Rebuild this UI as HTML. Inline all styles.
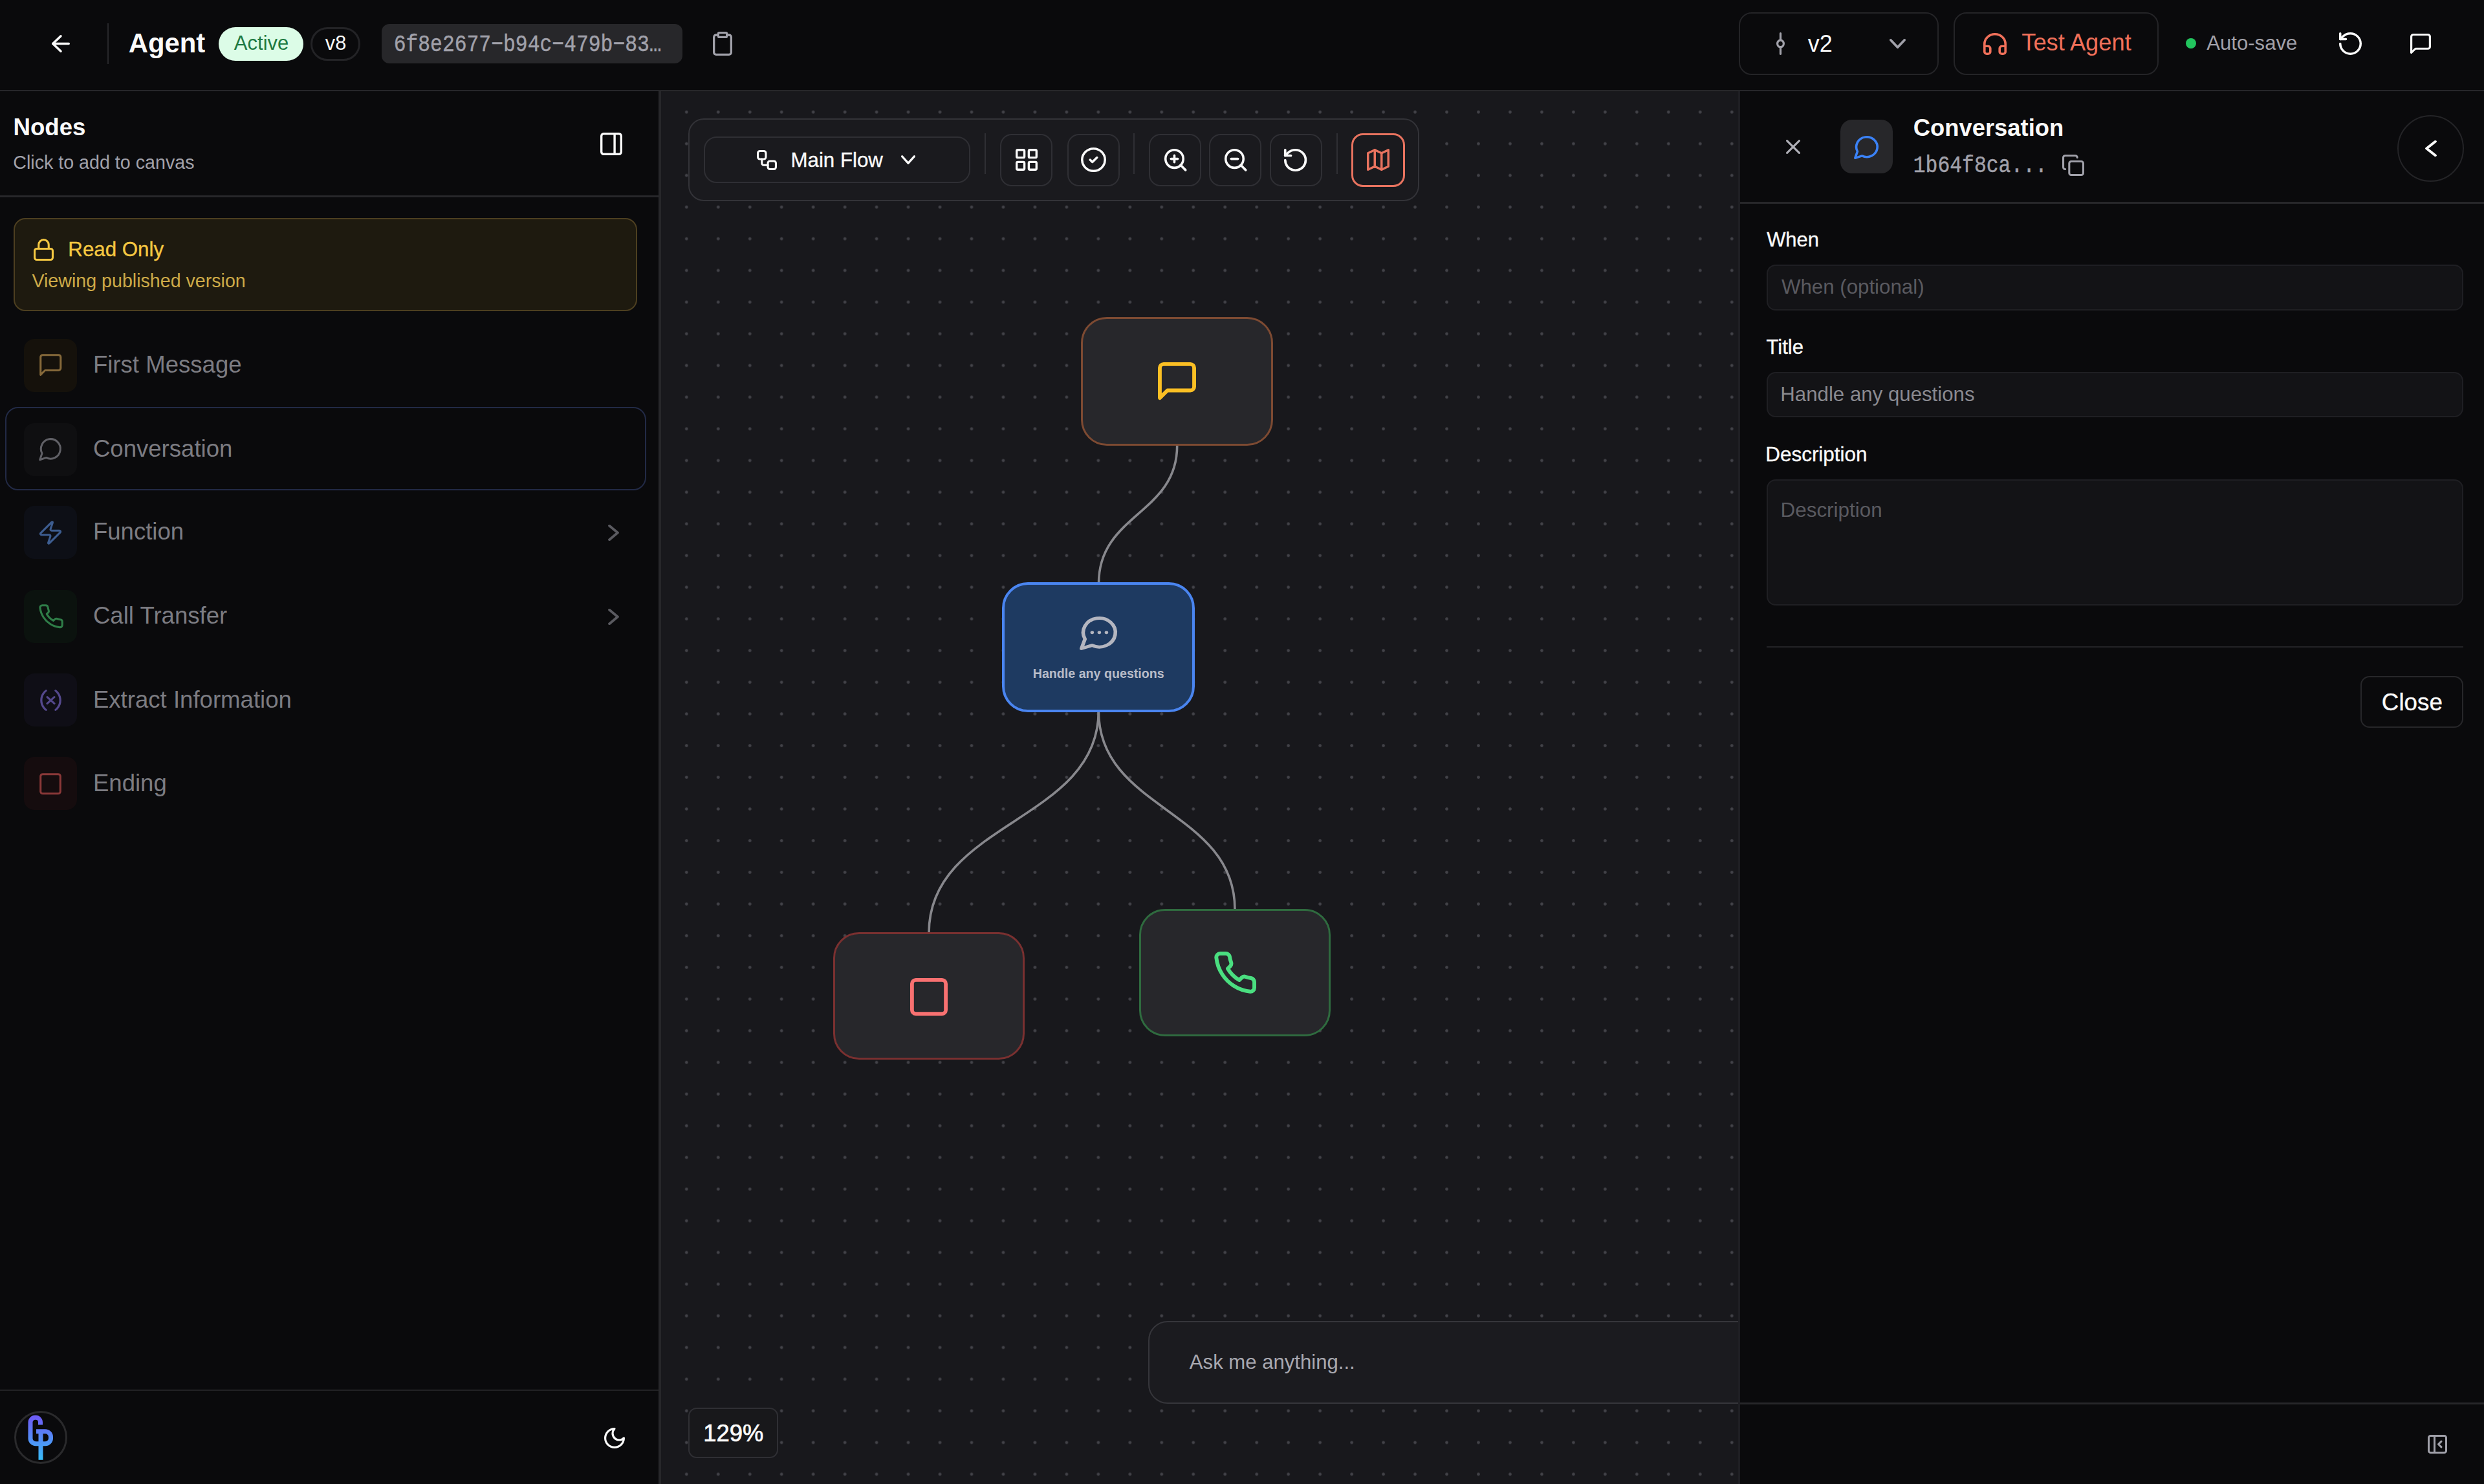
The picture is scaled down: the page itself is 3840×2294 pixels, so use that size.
<!DOCTYPE html>
<html><head><meta charset="utf-8"><title>Agent</title>
<style>
html,body{margin:0;padding:0;background:#0a0a0c;}
body{position:relative;width:3840px;height:2294px;overflow:hidden;font-family:"Liberation Sans",sans-serif;-webkit-font-smoothing:antialiased;}
svg{overflow:visible}
</style></head><body>
<div style="position:absolute;left:1020px;top:141px;width:1668px;height:2153px;background-color:#18181c;background-image:radial-gradient(circle at 24.4875px 24.4875px, #424248 0, #424248 1.8px, rgba(70,70,76,0) 2.9px);background-size:48.975px 48.975px;background-position:16.81px 7.71px"></div>
<div style="position:absolute;left:0px;top:0px;width:3840px;height:139px;box-sizing:border-box;background:#0a0a0c"></div>
<div style="position:absolute;left:0px;top:139px;width:3840px;height:2px;box-sizing:border-box;background:#27272a"></div>
<svg style="position:absolute;left:80px;top:54px;" width="28" height="27" viewBox="4 4 16 16" preserveAspectRatio="none" fill="none" stroke="#fafafa" stroke-width="2" stroke-linecap="round" stroke-linejoin="round"><path d="m12 19-7-7 7-7"/><path d="M19 12H5"/></svg>
<div style="position:absolute;left:166px;top:36px;width:2px;height:63px;box-sizing:border-box;background:#27272a"></div>
<div style="position:absolute;left:198.65px;top:40.17px;font:700 41.9px/54px 'Liberation Sans', sans-serif;color:#fafafa;white-space:nowrap;">Agent</div>
<div style="position:absolute;left:338px;top:42px;width:131px;height:52px;box-sizing:border-box;background:#dcfce7;border-radius:26px"></div>
<div style="position:absolute;left:361.84px;top:46.84px;font:400 31.03px/40px 'Liberation Sans', sans-serif;color:#1e7a42;white-space:nowrap;">Active</div>
<div style="position:absolute;left:480px;top:42px;width:77px;height:52px;box-sizing:border-box;border:3px solid #232326;border-radius:26px"></div>
<div style="position:absolute;left:502.85px;top:47.36px;font:400 30.69px/40px 'Liberation Sans', sans-serif;color:#fafafa;white-space:nowrap;">v8</div>
<div style="position:absolute;left:590px;top:37px;width:465px;height:61px;box-sizing:border-box;background:#27272a;border-radius:12px"></div>
<div style="position:absolute;left:608.65px;top:49.65px;font:400 31.37px/41px 'Liberation Mono', monospace;color:#a1a1aa;white-space:nowrap;transform:scaleY(1.16);transform-origin:0 28.85px;-webkit-text-stroke:0.4px currentColor;">6f8e2677−b94c−479b−83…</div>
<svg style="position:absolute;left:1102px;top:49px;" width="30" height="37" viewBox="3 1 18 22" preserveAspectRatio="none" fill="none" stroke="#a1a1aa" stroke-width="2" stroke-linecap="round" stroke-linejoin="round"><rect width="8" height="4" x="8" y="2" rx="1" ry="1"/><path d="M16 4h2a2 2 0 0 1 2 2v14a2 2 0 0 1-2 2H6a2 2 0 0 1-2-2V6a2 2 0 0 1 2-2h2"/></svg>
<div style="position:absolute;left:2688px;top:19px;width:309px;height:97px;box-sizing:border-box;border:2.5px solid #242427;border-radius:20px"></div>
<svg style="position:absolute;left:2746px;top:50px;" width="13" height="35" viewBox="8 2 8 20" preserveAspectRatio="none" fill="none" stroke="#a1a1aa" stroke-width="2" stroke-linecap="round" stroke-linejoin="round"><path d="M12 3v6"/><circle cx="12" cy="12" r="3"/><path d="M12 15v6"/></svg>
<div style="position:absolute;left:2794.82px;top:44.02px;font:400 36.0px/47px 'Liberation Sans', sans-serif;color:#fafafa;white-space:nowrap;">v2</div>
<svg style="position:absolute;left:2921px;top:60px;" width="25" height="15" viewBox="5 8 14 8" preserveAspectRatio="none" fill="none" stroke="#a1a1aa" stroke-width="2" stroke-linecap="round" stroke-linejoin="round"><path d="m6 9 6 6 6-6"/></svg>
<div style="position:absolute;left:3020px;top:19px;width:317px;height:97px;box-sizing:border-box;border:2.5px solid #242427;border-radius:20px"></div>
<svg style="position:absolute;left:3066px;top:51px;" width="36" height="34" viewBox="2 2 20 20" preserveAspectRatio="none" fill="none" stroke="#f0705a" stroke-width="2" stroke-linecap="round" stroke-linejoin="round"><path d="M3 14h3a2 2 0 0 1 2 2v3a2 2 0 0 1-2 2H5a2 2 0 0 1-2-2v-7a9 9 0 0 1 18 0v7a2 2 0 0 1-2 2h-1a2 2 0 0 1-2-2v-3a2 2 0 0 1 2-2h3"/></svg>
<div style="position:absolute;left:3125.27px;top:42.31px;font:400 36.3px/47px 'Liberation Sans', sans-serif;color:#f0705a;white-space:nowrap;">Test Agent</div>
<div style="position:absolute;left:3379px;top:59px;width:16px;height:16px;box-sizing:border-box;background:#22c55e;border-radius:50%"></div>
<div style="position:absolute;left:3411.34px;top:46.62px;font:400 31.09px/40px 'Liberation Sans', sans-serif;color:#a1a1aa;white-space:nowrap;">Auto-save</div>
<svg style="position:absolute;left:3616px;top:50px;" width="35" height="35" viewBox="2 2 20 20" preserveAspectRatio="none" fill="none" stroke="#fafafa" stroke-width="2" stroke-linecap="round" stroke-linejoin="round"><path d="M3 12a9 9 0 1 0 9-9 9.75 9.75 0 0 0-6.74 2.74L3 8"/><path d="M3 3v5h5"/></svg>
<svg style="position:absolute;left:3726px;top:52px;" width="32" height="31" viewBox="2 2 20 20" preserveAspectRatio="none" fill="none" stroke="#fafafa" stroke-width="2" stroke-linecap="round" stroke-linejoin="round"><path d="M21 15a2 2 0 0 1-2 2H7l-4 4V5a2 2 0 0 1 2-2h14a2 2 0 0 1 2 2z"/></svg>
<div style="position:absolute;left:0px;top:141px;width:1018px;height:2153px;box-sizing:border-box;background:#0a0a0c"></div>
<div style="position:absolute;left:1018px;top:141px;width:4px;height:2153px;box-sizing:border-box;background:#27272a"></div>
<div style="position:absolute;left:20.42px;top:173.28px;font:700 36.68px/48px 'Liberation Sans', sans-serif;color:#fafafa;white-space:nowrap;">Nodes</div>
<div style="position:absolute;left:20.27px;top:232.57px;font:400 28.65px/37px 'Liberation Sans', sans-serif;color:#a1a1aa;white-space:nowrap;">Click to add to canvas</div>
<svg style="position:absolute;left:928px;top:205px;" width="34" height="35" viewBox="2 2 20 20" preserveAspectRatio="none" fill="none" stroke="#fafafa" stroke-width="2" stroke-linecap="round" stroke-linejoin="round"><rect width="18" height="18" x="3" y="3" rx="2"/><path d="M15 3v18"/></svg>
<div style="position:absolute;left:0px;top:302px;width:1018px;height:3px;box-sizing:border-box;background:#27272a"></div>
<div style="position:absolute;left:21px;top:337px;width:964px;height:144px;box-sizing:border-box;background:#1e1a0f;border:2.5px solid #4d3f20;border-radius:18px"></div>
<svg style="position:absolute;left:52px;top:369px;" width="31" height="34" viewBox="2 1 20 22" preserveAspectRatio="none" fill="none" stroke="#f5c842" stroke-width="2" stroke-linecap="round" stroke-linejoin="round"><rect width="18" height="11" x="3" y="11" rx="2" ry="2"/><path d="M7 11V7a5 5 0 0 1 10 0v4"/></svg>
<div style="position:absolute;left:105.30px;top:365.05px;font:400 31.29px/41px 'Liberation Sans', sans-serif;color:#f5c842;white-space:nowrap;-webkit-text-stroke:0.35px currentColor;">Read Only</div>
<div style="position:absolute;left:49.46px;top:416.18px;font:400 28.61px/37px 'Liberation Sans', sans-serif;color:#cdaa48;white-space:nowrap;">Viewing published version</div>
<div style="position:absolute;left:8px;top:629px;width:991px;height:129px;box-sizing:border-box;border:2.5px solid #222a46;border-radius:20px"></div>
<div style="position:absolute;left:37px;top:524px;width:82px;height:82px;box-sizing:border-box;background:#15110b;border-radius:16px"></div>
<svg style="position:absolute;left:60.7px;top:547px;" width="34.5" height="34" viewBox="2 2 20 20" preserveAspectRatio="none" fill="none" stroke="#86693a" stroke-width="1.8" stroke-linecap="round" stroke-linejoin="round"><path d="M21 15a2 2 0 0 1-2 2H7l-4 4V5a2 2 0 0 1 2-2h14a2 2 0 0 1 2 2z"/></svg>
<div style="position:absolute;left:143.90px;top:540.11px;font:400 36.6px/48px 'Liberation Sans', sans-serif;color:#7c7c82;white-space:nowrap;">First Message</div>
<div style="position:absolute;left:37px;top:654px;width:82px;height:82px;box-sizing:border-box;background:#0f0f11;border-radius:16px"></div>
<svg style="position:absolute;left:60px;top:676.5px;" width="35" height="35.5" viewBox="1 2 21 21" preserveAspectRatio="none" fill="none" stroke="#606066" stroke-width="1.8" stroke-linecap="round" stroke-linejoin="round"><path d="M7.9 20A9 9 0 1 0 4 16.1L2 22Z"/></svg>
<div style="position:absolute;left:143.90px;top:670.31px;font:400 36.6px/48px 'Liberation Sans', sans-serif;color:#7c7c82;white-space:nowrap;">Conversation</div>
<div style="position:absolute;left:37px;top:782px;width:82px;height:82px;box-sizing:border-box;background:#0d0f16;border-radius:16px"></div>
<svg style="position:absolute;left:61px;top:805px;" width="34" height="37" viewBox="2.2 0.9 19.6 22.200000000000003" preserveAspectRatio="none" fill="none" stroke="#3d5d90" stroke-width="1.8" stroke-linecap="round" stroke-linejoin="round"><path d="M4 14a1 1 0 0 1-.78-1.63l9.9-10.2a.5.5 0 0 1 .86.46l-1.92 6.02A1 1 0 0 0 13 10h7a1 1 0 0 1 .78 1.63l-9.9 10.2a.5.5 0 0 1-.86-.46l1.92-6.02A1 1 0 0 0 11 14z"/></svg>
<div style="position:absolute;left:143.90px;top:798.21px;font:400 36.6px/48px 'Liberation Sans', sans-serif;color:#7c7c82;white-space:nowrap;">Function</div>
<div style="position:absolute;left:37px;top:912px;width:82px;height:82px;box-sizing:border-box;background:#0b120e;border-radius:16px"></div>
<svg style="position:absolute;left:59.5px;top:934px;" width="38.0" height="37.5" viewBox="1 1 22 22" preserveAspectRatio="none" fill="none" stroke="#2f7d48" stroke-width="1.8" stroke-linecap="round" stroke-linejoin="round"><path d="M22 16.92v3a2 2 0 0 1-2.18 2 19.79 19.79 0 0 1-8.63-3.07 19.5 19.5 0 0 1-6-6 19.79 19.79 0 0 1-3.07-8.67A2 2 0 0 1 4.11 2h3a2 2 0 0 1 2 1.72 12.84 12.84 0 0 0 .7 2.81 2 2 0 0 1-.45 2.11L8.09 9.910a16 16 0 0 0 6 6l1.27-1.27a2 2 0 0 1 2.11-.45 12.84 12.84 0 0 0 2.81.7A2 2 0 0 1 22 16.92z"/></svg>
<div style="position:absolute;left:143.90px;top:928.11px;font:400 36.6px/48px 'Liberation Sans', sans-serif;color:#7c7c82;white-space:nowrap;">Call Transfer</div>
<div style="position:absolute;left:37px;top:1041px;width:82px;height:82px;box-sizing:border-box;background:#0f0e16;border-radius:16px"></div>
<svg style="position:absolute;left:61.5px;top:1066px;" width="33.0" height="33" viewBox="3 2 18 20" preserveAspectRatio="none" fill="none" stroke="#54488c" stroke-width="1.8" stroke-linecap="round" stroke-linejoin="round"><path d="M8 21s-4-3-4-9 4-9 4-9"/><path d="M16 3s4 3 4 9-4 9-4 9"/><line x1="15" x2="9" y1="9" y2="15"/><line x1="9" x2="15" y1="9" y2="15"/></svg>
<div style="position:absolute;left:143.90px;top:1057.61px;font:400 36.6px/48px 'Liberation Sans', sans-serif;color:#7c7c82;white-space:nowrap;">Extract Information</div>
<div style="position:absolute;left:37px;top:1170px;width:82px;height:82px;box-sizing:border-box;background:#150c0e;border-radius:16px"></div>
<svg style="position:absolute;left:61px;top:1194.5px;" width="34" height="33.5" viewBox="2 2 20 20" preserveAspectRatio="none" fill="none" stroke="#8a3838" stroke-width="1.8" stroke-linecap="round" stroke-linejoin="round"><rect width="18" height="18" x="3" y="3" rx="2"/></svg>
<div style="position:absolute;left:143.90px;top:1186.61px;font:400 36.6px/48px 'Liberation Sans', sans-serif;color:#7c7c82;white-space:nowrap;">Ending</div>
<svg style="position:absolute;left:940px;top:810.6px;" width="17" height="25.0" viewBox="8 5 8 14" preserveAspectRatio="none" fill="none" stroke="#5a5a60" stroke-width="2" stroke-linecap="round" stroke-linejoin="round"><path d="m9 18 6-6-6-6"/></svg>
<svg style="position:absolute;left:940px;top:940.5px;" width="17" height="25.0" viewBox="8 5 8 14" preserveAspectRatio="none" fill="none" stroke="#5a5a60" stroke-width="2" stroke-linecap="round" stroke-linejoin="round"><path d="m9 18 6-6-6-6"/></svg>
<div style="position:absolute;left:0px;top:2148px;width:1018px;height:2px;box-sizing:border-box;background:#222225"></div>
<div style="position:absolute;left:22px;top:2181px;width:82px;height:82px;box-sizing:border-box;border:3px solid #2a2a2c;border-radius:50%"></div>
<svg style="position:absolute;left:22px;top:2181px" width="82" height="82" viewBox="0 0 82 82">
<defs><linearGradient id="lg" x1="0" y1="0" x2="0" y2="1"><stop offset="0" stop-color="#6d5df5"/><stop offset="1" stop-color="#38bdf8"/></linearGradient></defs>
<path d="M40.5 21.6 V17.5 a 7.2 7.2 0 0 0 -7.2 -7.2 H32.2 a 7.2 7.2 0 0 0 -7.2 7.2 V42.5 a 8.2 8.2 0 0 0 8.2 8.2 H48 a 8.5 8.5 0 0 0 8.5 -8.5 V40.2 a 8.5 8.5 0 0 0 -8.5 -8.5 H34 M41 31.7 V75.7" fill="none" stroke="url(#lg)" stroke-width="7" stroke-linejoin="round"/>
</svg>
<svg style="position:absolute;left:934px;top:2207px;" width="32" height="32" viewBox="2 2 20 20" preserveAspectRatio="none" fill="none" stroke="#fafafa" stroke-width="2" stroke-linecap="round" stroke-linejoin="round"><path d="M12 3a6 6 0 0 0 9 9 9 9 0 1 1-9-9Z"/></svg>
<div style="position:absolute;left:1064px;top:183px;width:1130px;height:128px;box-sizing:border-box;background:#1a1a1e;border:2px solid #333338;border-radius:24px"></div>
<div style="position:absolute;left:1088px;top:211px;width:412px;height:72px;box-sizing:border-box;border:2px solid #2f2f34;border-radius:20px"></div>
<svg style="position:absolute;left:1170px;top:232px;" width="31" height="31" viewBox="2 2 20 20" preserveAspectRatio="none" fill="none" stroke="#fafafa" stroke-width="2" stroke-linecap="round" stroke-linejoin="round"><rect width="8" height="8" x="3" y="3" rx="2"/><path d="M7 11v4a2 2 0 0 0 2 2h4"/><rect width="8" height="8" x="13" y="13" rx="2"/></svg>
<div style="position:absolute;left:1222.50px;top:226.67px;font:400 31.25px/41px 'Liberation Sans', sans-serif;color:#fafafa;white-space:nowrap;-webkit-text-stroke:0.35px currentColor;">Main Flow</div>
<svg style="position:absolute;left:1393px;top:240px;" width="22" height="14" viewBox="5 8 14 8" preserveAspectRatio="none" fill="none" stroke="#fafafa" stroke-width="2" stroke-linecap="round" stroke-linejoin="round"><path d="m6 9 6 6 6-6"/></svg>
<div style="position:absolute;left:1522px;top:206px;width:2px;height:63px;box-sizing:border-box;background:#2f2f34"></div>
<div style="position:absolute;left:1546px;top:207px;width:81px;height:81px;box-sizing:border-box;border:2px solid #2f2f34;border-radius:18px"></div>
<div style="position:absolute;left:1650px;top:207px;width:81px;height:81px;box-sizing:border-box;border:2px solid #2f2f34;border-radius:18px"></div>
<div style="position:absolute;left:1776px;top:207px;width:81px;height:81px;box-sizing:border-box;border:2px solid #2f2f34;border-radius:18px"></div>
<div style="position:absolute;left:1869px;top:207px;width:81px;height:81px;box-sizing:border-box;border:2px solid #2f2f34;border-radius:18px"></div>
<div style="position:absolute;left:1963px;top:207px;width:81px;height:81px;box-sizing:border-box;border:2px solid #2f2f34;border-radius:18px"></div>
<svg style="position:absolute;left:1570px;top:230px;" width="34" height="34" viewBox="2 2 20 20" preserveAspectRatio="none" fill="none" stroke="#fafafa" stroke-width="2" stroke-linecap="round" stroke-linejoin="round"><rect width="7" height="7" x="3" y="3" rx="1"/><rect width="7" height="7" x="14" y="3" rx="1"/><rect width="7" height="7" x="14" y="14" rx="1"/><rect width="7" height="7" x="3" y="14" rx="1"/></svg>
<svg style="position:absolute;left:1671px;top:228px;" width="39" height="38" viewBox="1 1 22 22" preserveAspectRatio="none" fill="none" stroke="#fafafa" stroke-width="2" stroke-linecap="round" stroke-linejoin="round"><circle cx="12" cy="12" r="10"/><path d="m9 12 2 2 4-4"/></svg>
<div style="position:absolute;left:1752px;top:206px;width:2px;height:63px;box-sizing:border-box;background:#2f2f34"></div>
<svg style="position:absolute;left:1800px;top:230.2px;" width="34.40000000000009" height="34.60000000000002" viewBox="2 2 20 20" preserveAspectRatio="none" fill="none" stroke="#fafafa" stroke-width="2.1" stroke-linecap="round" stroke-linejoin="round"><circle cx="11" cy="11" r="8"/><line x1="21" x2="16.65" y1="21" y2="16.65"/><line x1="11" x2="11" y1="8" y2="14"/><line x1="8" x2="14" y1="11" y2="11"/></svg>
<svg style="position:absolute;left:1893px;top:230.2px;" width="34.40000000000009" height="34.60000000000002" viewBox="2 2 20 20" preserveAspectRatio="none" fill="none" stroke="#fafafa" stroke-width="2.1" stroke-linecap="round" stroke-linejoin="round"><circle cx="11" cy="11" r="8"/><line x1="21" x2="16.65" y1="21" y2="16.65"/><line x1="8" x2="14" y1="11" y2="11"/></svg>
<svg style="position:absolute;left:1985.3px;top:230.2px;" width="35.200000000000045" height="35.0" viewBox="2 2 20 20" preserveAspectRatio="none" fill="none" stroke="#fafafa" stroke-width="2.1" stroke-linecap="round" stroke-linejoin="round"><path d="M3 12a9 9 0 1 0 9-9 9.75 9.75 0 0 0-6.74 2.74L3 8"/><path d="M3 3v5h5"/></svg>
<div style="position:absolute;left:2066px;top:206px;width:2px;height:63px;box-sizing:border-box;background:#2f2f34"></div>
<div style="position:absolute;left:2089px;top:206px;width:83px;height:83px;box-sizing:border-box;border:3px solid #e8735f;border-radius:18px"></div>
<svg style="position:absolute;left:2113px;top:230px;" width="35" height="34" viewBox="2 2 20 20" preserveAspectRatio="none" fill="none" stroke="#e8735f" stroke-width="2" stroke-linecap="round" stroke-linejoin="round"><polygon points="3 6 9 3 15 6 21 3 21 18 15 21 9 18 3 21"/><line x1="9" x2="9" y1="3" y2="18"/><line x1="15" x2="15" y1="6" y2="21"/></svg>
<svg style="position:absolute;left:0;top:0" width="3840" height="2294" viewBox="0 0 3840 2294" fill="none" stroke="#88888d" stroke-width="3.6">
<path d="M1819.7,689 C1819.7,794.5 1698.5,794.5 1698.5,902"/>
<path d="M1698.3,1099 C1698.3,1270 1436,1270 1436,1442"/>
<path d="M1698.3,1099 C1698.3,1252 1909,1252 1909,1406"/>
</svg>
<div style="position:absolute;left:1671px;top:490px;width:297px;height:199px;box-sizing:border-box;background:#27272b;border:3px solid #7d4a32;border-radius:40px"></div>
<svg style="position:absolute;left:1790px;top:560px;" width="59" height="58" viewBox="2 2 20 20" preserveAspectRatio="none" fill="none" stroke="#fbbf24" stroke-width="2" stroke-linecap="round" stroke-linejoin="round"><path d="M21 15a2 2 0 0 1-2 2H7l-4 4V5a2 2 0 0 1 2-2h14a2 2 0 0 1 2 2z"/></svg>
<div style="position:absolute;left:1549px;top:900px;width:298px;height:201px;box-sizing:border-box;background:#1e3a61;border:4.5px solid #4a85f0;border-radius:40px"></div>
<svg style="position:absolute;left:1669px;top:953px;" width="58" height="52" viewBox="1 2 21 21" preserveAspectRatio="none" fill="none" stroke="#b4b6c0" stroke-width="2" stroke-linecap="round" stroke-linejoin="round"><path d="M7.9 20A9 9 0 1 0 4 16.1L2 22Z"/><path d="M8 12h.01"/><path d="M12 12h.01"/><path d="M16 12h.01"/></svg>
<div style="position:absolute;left:1596.72px;top:1027.99px;font:700 19.65px/26px 'Liberation Sans', sans-serif;color:#b8bcc8;white-space:nowrap;">Handle any questions</div>
<div style="position:absolute;left:1288px;top:1441px;width:296px;height:197px;box-sizing:border-box;background:#27272b;border:3px solid #7a3030;border-radius:40px"></div>
<svg style="position:absolute;left:1407px;top:1512px;" width="58" height="58" viewBox="2 2 20 20" preserveAspectRatio="none" fill="none" stroke="#f87171" stroke-width="2" stroke-linecap="round" stroke-linejoin="round"><rect width="18" height="18" x="3" y="3" rx="2"/></svg>
<div style="position:absolute;left:1761px;top:1405px;width:296px;height:197px;box-sizing:border-box;background:#27272b;border:3px solid #2f6b3f;border-radius:40px"></div>
<svg style="position:absolute;left:1877px;top:1471px;" width="65" height="65" viewBox="1 1 22 22" preserveAspectRatio="none" fill="none" stroke="#4ade80" stroke-width="2" stroke-linecap="round" stroke-linejoin="round"><path d="M22 16.92v3a2 2 0 0 1-2.18 2 19.79 19.79 0 0 1-8.63-3.07 19.5 19.5 0 0 1-6-6 19.79 19.79 0 0 1-3.07-8.67A2 2 0 0 1 4.11 2h3a2 2 0 0 1 2 1.72 12.84 12.84 0 0 0 .7 2.81 2 2 0 0 1-.45 2.11L8.09 9.910a16 16 0 0 0 6 6l1.27-1.27a2 2 0 0 1 2.11-.45 12.84 12.84 0 0 0 2.81.7A2 2 0 0 1 22 16.92z"/></svg>
<div style="position:absolute;left:1064px;top:2176px;width:139px;height:78px;box-sizing:border-box;background:#18181b;border:2.5px solid #2f2f34;border-radius:13px"></div>
<div style="position:absolute;left:1087.28px;top:2191.50px;font:400 36.33px/47px 'Liberation Sans', sans-serif;color:#fafafa;white-space:nowrap;-webkit-text-stroke:0.7px currentColor;">129%</div>
<div style="position:absolute;left:1775px;top:2042px;width:945px;height:128px;box-sizing:border-box;background:#1b1b1f;border:2.5px solid #36363b;border-radius:30px"></div>
<div style="position:absolute;left:1838.84px;top:2085.61px;font:400 31.12px/40px 'Liberation Sans', sans-serif;color:#a8a8b0;white-space:nowrap;">Ask me anything...</div>
<div style="position:absolute;left:2688px;top:141px;width:1152px;height:2153px;box-sizing:border-box;background:#0a0a0c"></div>
<div style="position:absolute;left:2687px;top:141px;width:3px;height:2153px;box-sizing:border-box;background:#1f1f23"></div>
<svg style="position:absolute;left:2761px;top:216px;" width="22" height="22" viewBox="5 5 14 14" preserveAspectRatio="none" fill="none" stroke="#b0b0b8" stroke-width="2" stroke-linecap="round" stroke-linejoin="round"><path d="M18 6 6 18"/><path d="m6 6 12 12"/></svg>
<div style="position:absolute;left:2845px;top:185px;width:81px;height:83px;box-sizing:border-box;background:#27272a;border-radius:18px"></div>
<svg style="position:absolute;left:2866px;top:210px;" width="38" height="36" viewBox="1 2 21 21" preserveAspectRatio="none" fill="none" stroke="#3b82f6" stroke-width="2" stroke-linecap="round" stroke-linejoin="round"><path d="M7.9 20A9 9 0 1 0 4 16.1L2 22Z"/></svg>
<div style="position:absolute;left:2957.85px;top:173.89px;font:700 36.36px/47px 'Liberation Sans', sans-serif;color:#fafafa;white-space:nowrap;">Conversation</div>
<div style="position:absolute;left:2957.80px;top:236.75px;font:400 31.38px/41px 'Liberation Mono', monospace;color:#a1a1aa;white-space:nowrap;transform:scaleY(1.16);transform-origin:0 28.85px;-webkit-text-stroke:0.4px currentColor;">1b64f8ca...</div>
<svg style="position:absolute;left:3188px;top:239px;" width="34" height="33" viewBox="1 1 22 22" preserveAspectRatio="none" fill="none" stroke="#a1a1aa" stroke-width="2" stroke-linecap="round" stroke-linejoin="round"><rect width="14" height="14" x="8" y="8" rx="2" ry="2"/><path d="M4 16c-1.1 0-2-.9-2-2V4c0-1.1.9-2 2-2h10c1.1 0 2 .9 2 2"/></svg>
<div style="position:absolute;left:3706px;top:178px;width:103px;height:103px;box-sizing:border-box;border:2.5px solid #242427;border-radius:50%"></div>
<svg style="position:absolute;left:3749px;top:217px;" width="18" height="25" viewBox="8 5 8 14" preserveAspectRatio="none" fill="none" stroke="#fafafa" stroke-width="2" stroke-linecap="round" stroke-linejoin="round"><path d="m15 18-6-6 6-6"/></svg>
<div style="position:absolute;left:2690px;top:312px;width:1150px;height:3px;box-sizing:border-box;background:#27272a"></div>
<div style="position:absolute;left:2731.15px;top:351.28px;font:400 30.92px/40px 'Liberation Sans', sans-serif;color:#fafafa;white-space:nowrap;-webkit-text-stroke:0.35px currentColor;">When</div>
<div style="position:absolute;left:2731px;top:409px;width:1077px;height:71px;box-sizing:border-box;background:#131316;border:2px solid #1f1f23;border-radius:14px"></div>
<div style="position:absolute;left:2753.94px;top:423.27px;font:400 31.25px/41px 'Liberation Sans', sans-serif;color:#5a5a60;white-space:nowrap;">When (optional)</div>
<div style="position:absolute;left:2730.48px;top:516.73px;font:400 31.06px/40px 'Liberation Sans', sans-serif;color:#fafafa;white-space:nowrap;-webkit-text-stroke:0.35px currentColor;">Title</div>
<div style="position:absolute;left:2731px;top:575px;width:1077px;height:70px;box-sizing:border-box;background:#131316;border:2px solid #1f1f23;border-radius:14px"></div>
<div style="position:absolute;left:2752.30px;top:588.77px;font:400 31.23px/41px 'Liberation Sans', sans-serif;color:#8a8a90;white-space:nowrap;">Handle any questions</div>
<div style="position:absolute;left:2729.28px;top:682.10px;font:400 31.44px/41px 'Liberation Sans', sans-serif;color:#fafafa;white-space:nowrap;-webkit-text-stroke:0.35px currentColor;">Description</div>
<div style="position:absolute;left:2731px;top:741px;width:1077px;height:195px;box-sizing:border-box;background:#131316;border:2px solid #1f1f23;border-radius:14px"></div>
<div style="position:absolute;left:2752.59px;top:767.91px;font:400 31.4px/41px 'Liberation Sans', sans-serif;color:#5a5a60;white-space:nowrap;">Description</div>
<div style="position:absolute;left:2731px;top:998.5px;width:1077px;height:2.5px;box-sizing:border-box;background:#232326"></div>
<div style="position:absolute;left:3649px;top:1045px;width:159px;height:80px;box-sizing:border-box;border:2px solid #27272a;border-radius:14px"></div>
<div style="position:absolute;left:3681.86px;top:1061.66px;font:400 36.75px/48px 'Liberation Sans', sans-serif;color:#fafafa;white-space:nowrap;-webkit-text-stroke:0.35px currentColor;">Close</div>
<div style="position:absolute;left:2690px;top:2168px;width:1150px;height:3px;box-sizing:border-box;background:#27272a"></div>
<svg style="position:absolute;left:3753px;top:2218px;" width="30" height="29" viewBox="2 2 20 20" preserveAspectRatio="none" fill="none" stroke="#a1a1aa" stroke-width="2" stroke-linecap="round" stroke-linejoin="round"><rect width="18" height="18" x="3" y="3" rx="2"/><path d="M9 3v18"/><path d="m16 15-3-3 3-3"/></svg>
</body></html>
